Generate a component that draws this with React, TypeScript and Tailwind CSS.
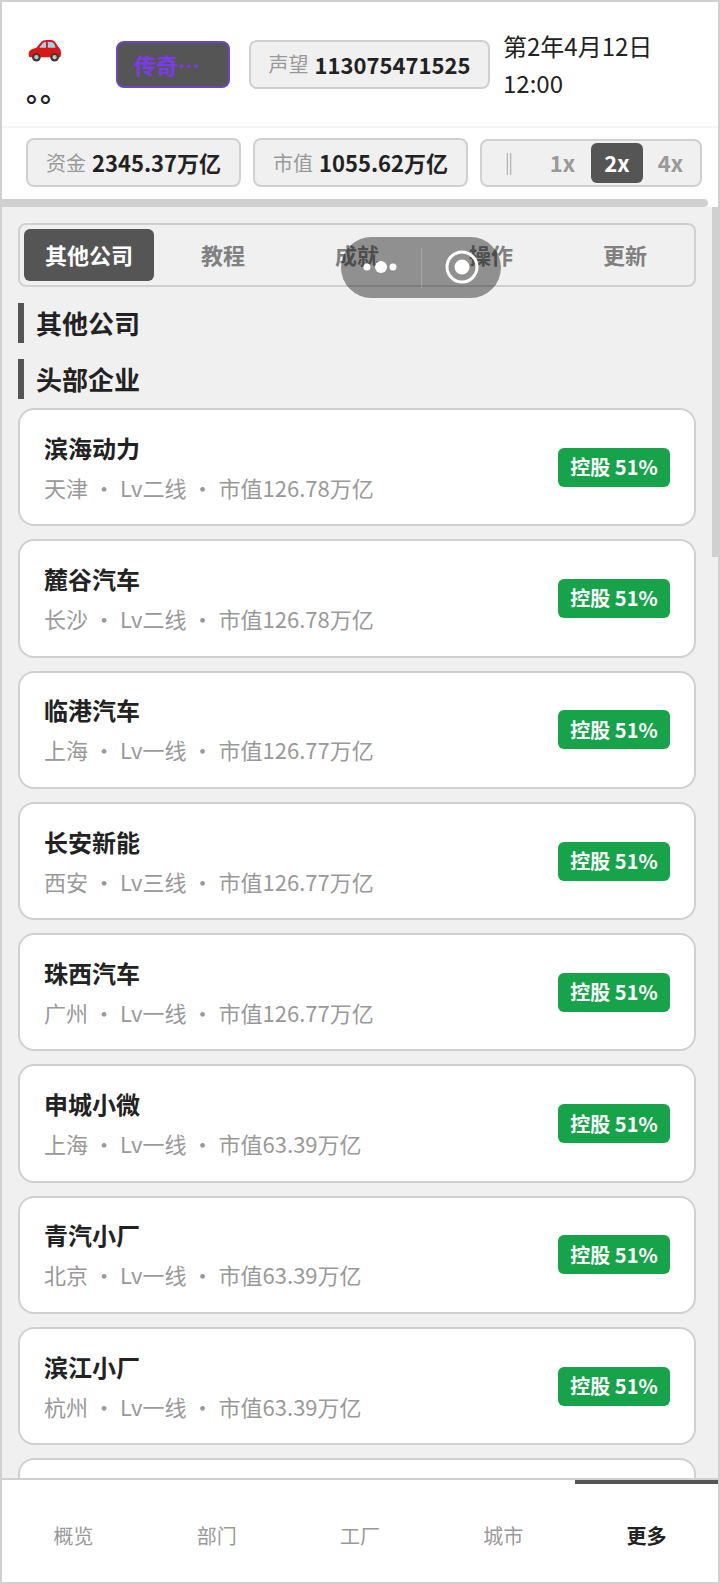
import React from 'react';

const companies = [
  { name: '滨海动力', city: '天津', level: '二线', value: '126.78' },
  { name: '麓谷汽车', city: '长沙', level: '二线', value: '126.78' },
  { name: '临港汽车', city: '上海', level: '一线', value: '126.77' },
  { name: '长安新能', city: '西安', level: '三线', value: '126.77' },
  { name: '珠西汽车', city: '广州', level: '一线', value: '126.77' },
  { name: '申城小微', city: '上海', level: '一线', value: '63.39' },
  { name: '青汽小厂', city: '北京', level: '一线', value: '63.39' },
  { name: '滨江小厂', city: '杭州', level: '一线', value: '63.39' },
];

const tabs = ['其他公司', '教程', '成就', '操作', '更新'];
const navItems = ['概览', '部门', '工厂', '城市', '更多'];

const CarIcon = () => (
  <svg width="36" height="23" viewBox="0 0 36 24" className="ml-[1px]">
    <path d="M1 15c0-3 3-5 8-6l5-6c1-1 3-2 6-2h4c3 0 5 2 7 6l3 4c1 2 1 6 0 8H2c-1-1-1-3-1-4z" fill="#dc1515" />
    <path d="M12 9l4-5c1-1 2-1 3-1v6zM21 3h3c2 0 3 1 4 3l1 3h-8z" fill="#9fd4ee" />
    <circle cx="9" cy="19" r="4.5" fill="#3a3a3a" />
    <circle cx="9" cy="19" r="2.2" fill="#c9c4b8" />
    <circle cx="28" cy="19" r="4.5" fill="#3a3a3a" />
    <circle cx="28" cy="19" r="2.2" fill="#c9c4b8" />
  </svg>
);

const Stat = ({ label, value, className }: { label: string; value: string; className: string }) => (
  <div className={`flex items-center justify-center h-[49px] bg-[#f0f0f0] border-2 border-[#d0d0d0] rounded-lg ${className}`}>
    <span className="text-[20px] text-[#999999] mr-[6px]">{label}</span>
    <span className="text-[22px] font-bold text-[#222222]">{value}</span>
  </div>
);

const App: React.FC = () => {
  return (
    <div
      className="relative flex flex-col h-[1584px] w-[720px] overflow-hidden border-2 border-[#d0d0d0] bg-white text-[#222222]"
      style={{ fontFamily: '"Noto Sans CJK SC", "Noto Sans", sans-serif' }}
    >
      {/* Top bar */}
      <div className="flex items-center h-[126px] pl-6 border-b-2 border-[#f4f4f4]">
        <div className="w-[90px] flex flex-col pt-[18px]">
          <CarIcon />
          <span className="text-[28px] leading-[34px] mt-[11px] font-bold">。。</span>
        </div>
        <div className="flex items-center w-[114px] h-[47px] pl-[16px] bg-[#555555] border-2 border-[#6b46c1] rounded-lg text-[22px] font-bold text-[#7c3aed]">
          传奇…
        </div>
        <Stat label="声望" value="113075471525" className="w-[241px] ml-[19px]" />
        <div className="ml-[13px] text-[24px] leading-[37px]">
          <div>第2年4月12日</div>
          <div>12:00</div>
        </div>
      </div>

      {/* Money row */}
      <div className="flex items-center h-[71px] pl-6 pb-[2px] shrink-0">
        <Stat label="资金" value="2345.37万亿" className="w-[215px]" />
        <Stat label="市值" value="1055.62万亿" className="w-[215px] ml-3" />
        <div className="flex items-center w-[222px] h-[48px] ml-3 px-[2px] bg-[#f0f0f0] border-2 border-[#d0d0d0] rounded-lg text-[22px] font-bold text-[#999999]">
          <span className="w-[50px] shrink-0 text-center font-normal">‖</span>
          <span className="w-[57px] shrink-0 text-center">1x</span>
          <span className="w-[52px] h-[40px] shrink-0 flex items-center justify-center rounded-md bg-[#555555] text-white">2x</span>
          <span className="w-[55px] shrink-0 text-center">4x</span>
        </div>
      </div>

      {/* Horizontal scrollbar */}
      <div className="h-[8px] w-[706px] shrink-0 rounded-r-full bg-[#d0d0d0]" />

      {/* Content */}
      <div className="flex-1 min-h-0 overflow-hidden bg-[#f0f0f0] pl-4 pr-[22px] pt-4">
        <div className="flex items-center gap-1 h-[64px] p-1 bg-[#f0f0f0] border-2 border-[#d0d0d0] rounded-lg">
          {tabs.map((tab, i) => (
            <div
              key={tab}
              className={`flex-1 h-[52px] pb-[1px] flex items-center justify-center rounded-md text-[22px] font-bold ${
                i === 0 ? 'bg-[#555555] text-white' : 'text-[#808080]'
              }`}
            >
              {tab}
            </div>
          ))}
        </div>

        <div className="mt-4 h-[40px] flex items-center border-l-[6px] border-[#555555] pl-[12px] pb-[2px] text-[26px] font-bold">其他公司</div>
        <div className="mt-4 h-[40px] flex items-center border-l-[6px] border-[#555555] pl-[12px] pb-[2px] text-[26px] font-bold">头部企业</div>

        <div className="mt-[9px] flex flex-col gap-[13px]">
          {companies.map((c) => (
            <div key={c.name} className="flex items-center justify-between h-[118.3px] shrink-0 px-6 bg-white border-2 border-[#d0d0d0] rounded-2xl">
              <div>
                <div className="text-[24px] leading-[36px] font-bold">{c.name}</div>
                <div className="mt-[3px] text-[22px] leading-[36px] text-[#999999]">
                  {c.city}
                  <span className="mx-[5px]">·</span>
                  Lv{c.level}
                  <span className="mx-[5px]">·</span>
                  市值{c.value}万亿
                </div>
              </div>
              <div className="flex items-center justify-center w-[112px] h-[39px] rounded-md bg-[#16a34a] text-white text-[20px] font-bold">控股 51%</div>
            </div>
          ))}
          <div className="h-[118.3px] shrink-0 bg-white border-2 border-[#d0d0d0] rounded-2xl" />
        </div>
      </div>

      {/* Bottom nav */}
      <div className="relative flex items-center h-[104px] pt-[10px] shrink-0 bg-white border-t-2 border-[#d0d0d0]">
        {navItems.map((item, i) => (
          <div key={item} className={`flex-1 text-center text-[20px] ${i === 4 ? 'font-bold text-[#222222]' : 'text-[#999999]'}`}>
            {item}
          </div>
        ))}
        <div className="absolute top-0 right-0 w-[143px] h-[4px] bg-[#555555]" />
      </div>

      {/* Vertical scrollbar thumb */}
      <div className="absolute top-[205px] right-0 w-[6px] h-[350px] bg-[#d0d0d0]" />

      {/* Floating capsule */}
      <div className="absolute left-[339px] top-[235px] flex items-center w-[160px] h-[61px] rounded-full bg-black/40">
        <svg width="80" height="61" viewBox="0 0 80 61" className="shrink-0">
          <circle cx="26" cy="30" r="3.5" fill="#fff" />
          <circle cx="40" cy="30" r="6" fill="#fff" />
          <circle cx="52" cy="30" r="3.5" fill="#fff" />
        </svg>
        <div className="w-px h-[40px] bg-white/20 shrink-0" />
        <svg width="79" height="61" viewBox="0 0 79 61" className="shrink-0">
          <circle cx="40" cy="30" r="15" fill="none" stroke="#fff" strokeWidth="3" />
          <circle cx="40" cy="30" r="7.5" fill="#fff" />
        </svg>
      </div>
    </div>
  );
};

export default App;
